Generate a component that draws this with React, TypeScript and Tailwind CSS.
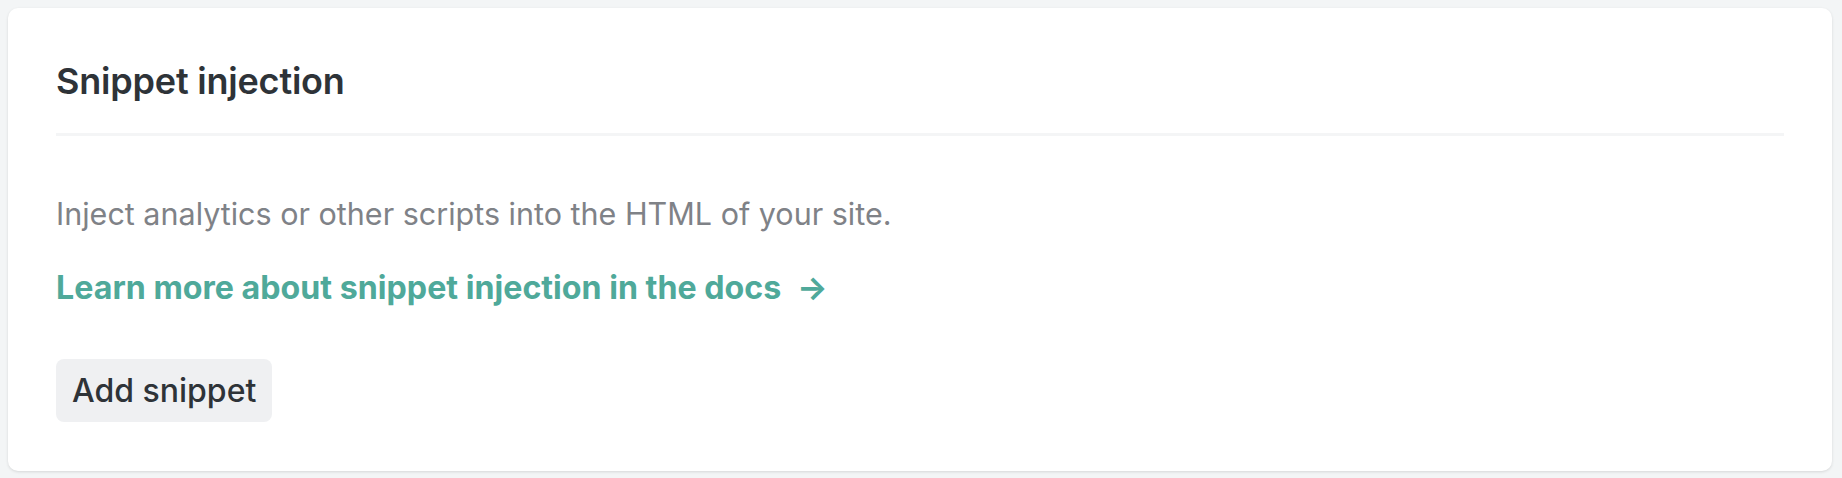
import React from 'react';

export default function App() {
  return (
    <div className="min-h-screen bg-[#f3f5f6] pt-2 pl-2 pr-[10px] pb-[6px] font-['Inter',sans-serif]">
      <section className="rounded-[10px] bg-white px-12 pt-[51px] pb-[49px] shadow-[0_1px_3px_rgba(0,0,0,0.12)]">
        <h2 className="text-[36px] leading-[44px] font-semibold text-[#2e3338] tracking-[-0.2px]">
          Snippet injection
        </h2>
        <div className="mt-[30px] h-[3px] bg-[#f4f5f6]" />
        <p className="mt-[58px] text-[30.5px] leading-[40px] text-[#7f8287]">
          Inject analytics or other scripts into the HTML of your site.
        </p>
        <a href="#" className="mt-[34px] inline-block text-[32.2px] leading-[40px] font-bold text-[#4fa99a]">
          Learn more about snippet injection in the docs <span className="ml-2">→</span>
        </a>
        <div className="mt-[51px]">
          <button className="h-[63px] rounded-lg bg-[#eff0f2] px-4 text-[32px] font-medium text-[#2e3338]">
            Add snippet
          </button>
        </div>
      </section>
    </div>
  );
}
